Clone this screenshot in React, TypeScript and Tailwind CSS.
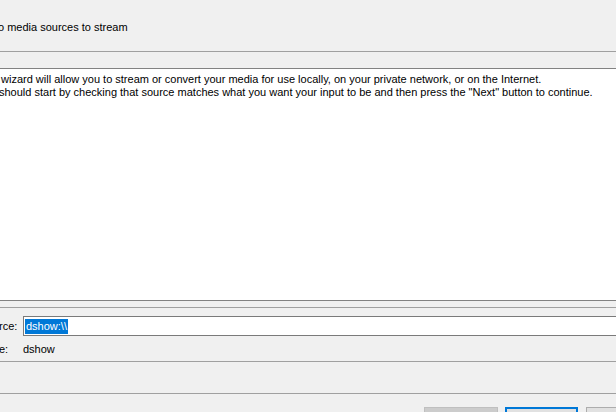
import React from "react";

export default function App() {
  return (
    <div className="w-[616px] h-[412px] overflow-hidden bg-[#f0f0f0] text-[11px] leading-[13px] text-black font-['Liberation_Sans',Arial,sans-serif] flex flex-col">
      {/* header */}
      <div className="h-[51px] flex items-center shrink-0 pt-[3px]">
        <span className="-ml-[2px]">o media sources to stream</span>
      </div>
      <div className="h-px bg-[#a0a0a0] shrink-0" />
      <div className="h-[16px] shrink-0" />
      <div className="h-px bg-[#828282] shrink-0" />
      {/* white area */}
      <div className="h-[231px] bg-white shrink-0 pt-[4px] pl-[1px] whitespace-nowrap">
        <div>wizard will allow you to stream or convert your media for use locally, on your private network, or on the Internet.</div>
        <div className="-ml-[2px]">should start by checking that source matches what you want your input to be and then press the "Next" button to continue.</div>
      </div>
      <div className="h-px bg-[#828282] shrink-0" />
      <div className="h-[6px] shrink-0" />
      <div className="h-px bg-[#a0a0a0] shrink-0" />
      {/* form */}
      <div className="h-[53px] shrink-0 flex flex-col pt-[8px]">
        <div className="flex items-center h-[20px]">
          <span className="w-[24px] shrink-0 -ml-[1px]">rce:</span>
          <div className="flex-1 h-[20px] border border-[#7a7a7a] bg-white flex items-center pl-[1px] -mr-[10px]">
            <span className="bg-[#0078d7] text-white px-[1px] leading-[15px]">dshow:\\</span>
          </div>
        </div>
        <div className="flex items-center h-[25px] pt-[1px]">
          <span className="w-[24px] shrink-0 -ml-[1px]">e:</span>
          <span>dshow</span>
        </div>
      </div>
      <div className="h-px bg-[#a0a0a0] shrink-0" />
      <div className="h-[31px] shrink-0" />
      <div className="h-px bg-[#a0a0a0] shrink-0" />
      <div className="h-[13px] shrink-0" />
      {/* buttons */}
      <div className="flex shrink-0 h-[23px]">
        <div className="shrink-0 ml-[424px] w-[74px] h-[23px] bg-[#cccccc] border border-[#bfbfbf]" />
        <div className="shrink-0 ml-[7px] w-[73px] h-[23px] bg-[#e1e1e1] border-2 border-[#0078d7]" />
        <div className="shrink-0 ml-[8px] w-[74px] h-[23px] bg-[#e1e1e1] border border-[#adadad]" />
      </div>
    </div>
  );
}
